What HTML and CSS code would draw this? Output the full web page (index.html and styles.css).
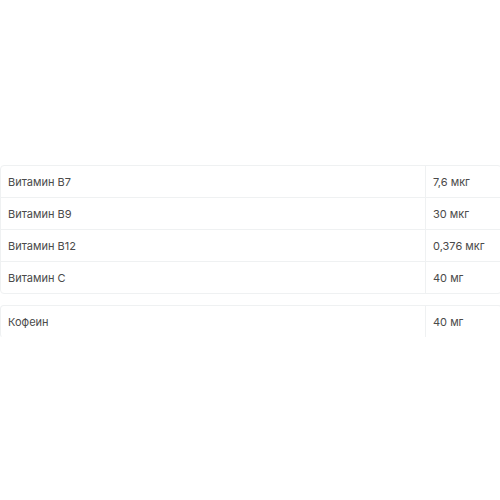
FILE: index.html
```html
<!DOCTYPE html>
<html lang="ru">
<head>
<meta charset="utf-8">
<link rel="stylesheet" href="styles.css">
</head>
<body>
<div class="page">
  <table class="nutri">
    <tr><td class="name">Витамин B7</td><td class="val">7,6 мкг</td></tr>
    <tr><td class="name">Витамин B9</td><td class="val">30 мкг</td></tr>
    <tr><td class="name">Витамин B12</td><td class="val">0,376 мкг</td></tr>
    <tr><td class="name">Витамин C</td><td class="val">40 мг</td></tr>
  </table>
  <table class="nutri open">
    <tr><td class="name">Кофеин</td><td class="val">40 мг</td></tr>
  </table>
</div>
</body>
</html>
```

FILE: styles.css
```css
html, body {
  margin: 0;
  padding: 0;
  background: #fff;
}
.page {
  padding-top: 165px;
  display: flex;
  flex-direction: column;
  gap: 11px;
  font-family: Inter, "Noto Sans", sans-serif;
  font-size: 11px;
  color: #4a4a4a;
}
.nutri {
  width: 502px;
  border-collapse: separate;
  border-spacing: 0;
  border: 1px solid #eff1f2;
  border-radius: 4px;
}
.nutri.open {
  border-bottom-color: transparent;
}
.nutri td {
  height: 31px;
  padding: 0 0 0 7px;
  vertical-align: middle;
  border-top: 1px solid #eff1f2;
}
.nutri tr:first-child td {
  border-top: none;
}
.nutri .name {
  width: 417px;
  border-right: 1px solid #eff1f2;
}
```
